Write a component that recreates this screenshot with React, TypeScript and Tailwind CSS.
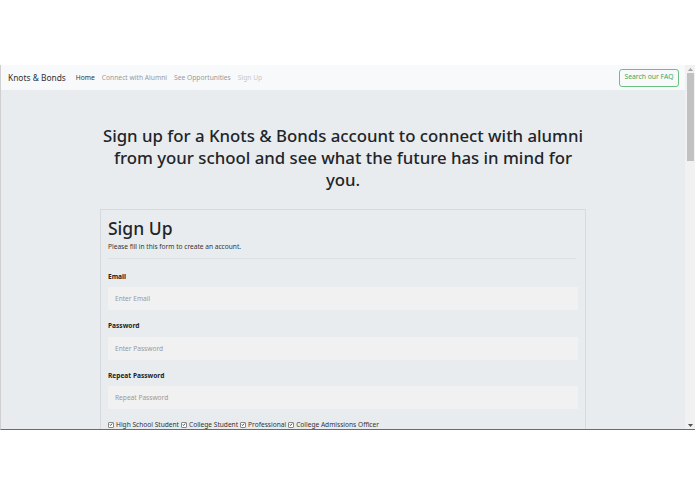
import React from "react";

const font = { fontFamily: '"Noto Sans", "Open Sans", sans-serif' };

function Check() {
  return (
    <span className="inline-flex items-center justify-center w-[6px] h-[6px] border border-[#888] bg-white rounded-[1px] mr-[2px]">
      <svg width="5" height="5" viewBox="0 0 10 10">
        <path d="M2 5 L4 7.5 L8 2.5" stroke="#333" strokeWidth="2" fill="none" />
      </svg>
    </span>
  );
}

export default function App() {
  return (
    <div className="w-[695px] h-[494px] bg-white overflow-hidden" style={font}>
      <div className="h-[65px]" />
      <div className="h-[365px] flex border-l border-[#cfcfcf] border-b border-b-[#6b6b6b]">
        <div className="flex-1 flex flex-col bg-[#e9ecef] overflow-hidden">
          <nav className="h-[25px] shrink-0 bg-[#f8f9fa] flex items-center pl-[7px] pr-[6px] pt-[2px]">
            <span className="text-[8.4px] text-[#333] mr-[10px]">Knots &amp; Bonds</span>
            <span className="text-[6.7px] text-[#333] mr-[7px]">Home</span>
            <span className="text-[6.7px] text-[#9a9a9a] mr-[7px]">Connect with Alumni</span>
            <span className="text-[6.7px] text-[#9a9a9a] mr-[7px]">See Opportunities</span>
            <span className="text-[6.7px] text-[#c8c8c8]">Sign Up</span>
            <div className="ml-auto -mt-[2px] h-[18px] w-[60px] flex items-center justify-center border border-[#6cc07f] rounded-[3px] text-[6.8px] text-[#3fa55a]">
              Search our FAQ
            </div>
          </nav>
          <div className="flex flex-col items-center pt-[35px]">
            <h1 className="w-[486px] text-center text-[16.8px] leading-[22px] font-medium text-[#212529]">
              Sign up for a Knots &amp; Bonds account to connect with alumni from your school and see what the future has in mind for you.
            </h1>
            <div className="mt-[18px] w-[486px] border border-[#d6dadf] px-[7px] pt-[6px]">
              <div className="text-[17.5px] leading-[24px] text-[#212529] font-medium">Sign Up</div>
              <div className="text-[6.6px] leading-[9px] text-[#333] mt-[2px]">Please fill in this form to create an account.</div>
              <div className="h-px bg-[#dde1e5] mt-[7px] mr-[2px]" />
              <div className="text-[6.6px] leading-[9px] font-bold text-[#222] mt-[13px]">Email</div>
              <div className="mt-[6px] h-[23px] bg-[#f1f1f1] flex items-center pl-[7px] text-[6.6px] text-[#999]">Enter Email</div>
              <div className="text-[6.6px] leading-[9px] font-bold text-[#222] mt-[11px]">Password</div>
              <div className="mt-[7px] h-[23px] bg-[#f1f1f1] flex items-center pl-[7px] text-[6.6px] text-[#999]">Enter Password</div>
              <div className="text-[6.6px] leading-[9px] font-bold text-[#222] mt-[11px]">Repeat Password</div>
              <div className="mt-[6px] h-[23px] bg-[#f1f1f1] flex items-center pl-[7px] text-[6.6px] text-[#999]">Repeat Password</div>
              <div className="mt-[11px] flex items-center text-[6.6px] leading-[9px] text-[#333] whitespace-nowrap">
                <Check />High School Student<span className="w-[2px]" />
                <Check />College Student<span className="w-[2px]" />
                <Check />Professional<span className="w-[2px]" />
                <Check />College Admissions Officer
              </div>
            </div>
          </div>
        </div>
        <div className="w-[10px] shrink-0 bg-[#f1f1f1] flex flex-col items-center">
          <div className="h-[8px] flex items-center justify-center">
            <svg width="5" height="3" viewBox="0 0 5 3"><path d="M0 3 L2.5 0 L5 3 Z" fill="#a3a3a3" /></svg>
          </div>
          <div className="w-[7px] h-[88px] bg-[#c1c1c1]" />
          <div className="flex-1" />
          <div className="h-[8px] flex items-center justify-center">
            <svg width="5" height="3" viewBox="0 0 5 3"><path d="M0 0 L5 0 L2.5 3 Z" fill="#505050" /></svg>
          </div>
        </div>
      </div>
    </div>
  );
}
